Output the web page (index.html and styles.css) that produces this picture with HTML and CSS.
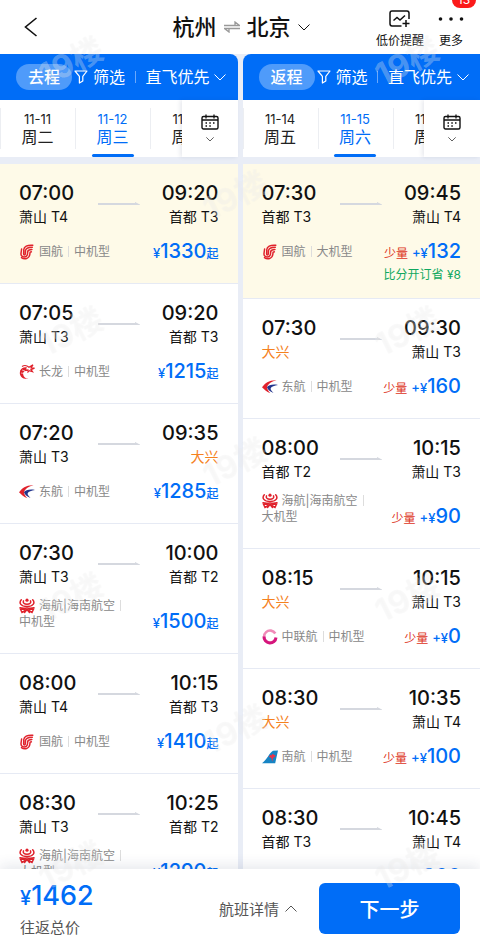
FILE: index.html
```html
<!DOCTYPE html>
<html lang="zh-CN">
<head>
<meta charset="utf-8">
<meta name="viewport" content="width=device-width, initial-scale=1">
<title>杭州 ⇌ 北京</title>
<link rel="stylesheet" href="styles.css">
</head>
<body>
<svg class="defs" aria-hidden="true">
  <symbol id="chevron" viewBox="0 0 12 8"><path d="M.5 1.500l5.500 5.500 5.500-5.500" fill="none" stroke="currentColor" stroke-width="1"/></symbol>
  <symbol id="funnel" viewBox="0 0 14 14"><path d="M1 1h12L8.800 6.400V11L5.400 13V6.400z" fill="none" stroke="currentColor" stroke-width="1.200" stroke-linejoin="round"/></symbol>
  <symbol id="calendar" viewBox="0 0 18 16"><rect x="1" y="2.500" width="16" height="12.500" rx="1.500" fill="none" stroke="currentColor" stroke-width="1.400"/><path d="M1 6h16M5 .5v4M13 .5v4" stroke="currentColor" stroke-width="1.300"/><path d="M4.500 9H6M8.300 9h1.500M12 9h1.500M4.500 12H6M8.300 12h1.500" stroke="currentColor" stroke-width="1.500"/></symbol>
  <symbol id="arrow" viewBox="0 0 42 4"><path d="M0 1h37V0l5 2.500V3H0z" fill="currentColor"/></symbol>
  <symbol id="airchina" viewBox="0 0 16 16"><g fill="none" stroke="#e0222c" stroke-width="1.500" stroke-linecap="round"><path d="M13.800 1.200C8 .8 5 2.500 4.800 5.500L4.600 10c0 1.300 1.600 1.300 1.700 0l.2-3.500C6.800 4.500 9 3.300 13.300 3.300"/><path d="M2.600 5L2 9.500c-.4 4.500 6 4.500 6.500.5l.2-2.500C9 6 10.500 5.500 12.900 5.400"/><path d="M2.500 13.600c3 2.300 7.800 1 8.300-3.100l.3-2.300 1.200-.4"/></g></symbol>
  <symbol id="loong" viewBox="0 0 16 16"><path d="M9.500 15C3 15.500 0 11.500 1 7.500 2 4 5 2.800 8 3.500L7 5.200l3 .3-1.500 1.700C5 6.500 3.800 8 4.200 10.500c.4 2.500 2.300 4 5.300 4.500z" fill="#e0222c"/><path d="M3 2.500c3-2 5-1 7 .8l4-2.500-2 3 3.500.3-3.500 1.500 1.500 2-3.500-1-1.500 2M5 5l-3.500 2" fill="none" stroke="#e0222c" stroke-width="1.200"/><path d="M3 6l3 1M2 9l3 .5" stroke="#fff" stroke-width=".6"/></symbol>
  <symbol id="eastern" viewBox="0 0 16 16"><path d="M14.500 1.200C7.500.8 3 4 0 8.300c2 2 4.500 4.700 8.300 6C6.200 11.700 4.800 9.800 5.200 8 6 4.500 10 2.300 14.500 1.200z" fill="#e0222c"/><path d="M16 6c-5-1-9.500 0-11 2.200.8 2.500 2.800 4 6.500 5.800-2-2.200-3.300-3.600-2.800-4.800C9.500 7.500 12.500 6.600 16 6z" fill="#23358c"/></symbol>
  <symbol id="hainan" viewBox="0 0 16 16"><g fill="none" stroke="#e0222c" stroke-width="1.500" stroke-linecap="round"><path d="M2.300 1.800C-.5 5 2 8.500 8 8.500S16.500 5 13.700 1.800"/><path d="M4.500 2.800c-1 2 .8 3.500 3.500 3.500s4.500-1.500 3.500-3.500"/><path d="M1 9.800c3.300 1 5 .3 7 .3s3.700.7 7-.3"/><path d="M6 11l-4.500.3 1.500 3.200L7 12M10 11l4.500.3-1.500 3.200L9 12M5.500 14.500L8 11.500l2.500 3"/></g><circle cx="8" cy="2.200" r="1.600" fill="#e0222c"/></symbol>
  <symbol id="united" viewBox="0 0 16 16"><path d="M13.300 4.500A6 6 0 1 0 13.600 10" fill="none" stroke="#f08ab8" stroke-width="2.600"/><path d="M2 7.500a6 6 0 0 0 12 1" fill="none" stroke="#d5157c" stroke-width="3"/></symbol>
  <symbol id="southern" viewBox="0 0 16 16"><path d="M0 14.200C5 11 7.500 3.500 11 1.800l5-.3-2.800 12.700z" fill="#1684c4"/><path d="M7 7.500c1-1.500 2-2 2.500-1 .8-1.800 2-1.800 2.500-.3 1-.7 2 .3 1.200 1.300-1 .8-2 1-2.200 1.800l-.8 3.500-.7-3.500c-.6-.8-1.700-.7-2.500-1.800z" fill="#e6324a"/></symbol>
</svg>

<header class="topbar">
  <button class="back" aria-label="返回"><svg viewBox="0 0 14 20"><path d="M12.500 1L1.500 10l11 9" fill="none" stroke="currentColor" stroke-width="1.600"/></svg></button>
  <button class="route"><span>杭州</span><svg class="swap" viewBox="0 0 16 12"><path d="M0 4.500h15.500L11 1v3.500M16 7.500H.5L5 11V7.500" fill="none" stroke="currentColor" stroke-width="1.300"/></svg><span>北京</span><svg class="chev"><use href="#chevron"/></svg></button>
  <div class="actions">
    <button class="action"><svg class="alert-icon" viewBox="0 0 22 18"><path d="M20 9V3.200C20 2 19.300 1 18 1H3C1.800 1 1 2 1 3.200v10.600C1 15 1.800 16 3 16h9.500M4.500 10.500l3.500-3 3 2.500 5-4.500M13.500 13.500h7M17 10v7" fill="none" stroke="currentColor" stroke-width="1.500"/></svg><span>低价提醒</span></button>
    <button class="action more"><svg class="dots" viewBox="0 0 26 18"><circle cx="2.500" cy="9" r="1.800"/><circle cx="13" cy="9" r="1.800"/><circle cx="23.500" cy="9" r="1.800"/></svg><span>更多</span><b class="badge">13</b></button>
  </div>
</header>

<main class="columns">
  <section class="column outbound">
    <div class="filters"><span class="pill">去程</span><button class="filter"><svg class="funnel"><use href="#funnel"/></svg>筛选</button><i class="bar"></i><button class="filter">直飞优先<svg class="chev"><use href="#chevron"/></svg></button></div>
    <nav class="dates">
      <div class="days"><button class="day"><span>11-11</span><b>周二</b></button><button class="day active"><span>11-12</span><b>周三</b></button><button class="day"><span>11-13</span><b>周四</b></button></div>
      <button class="calendar" aria-label="选择日期"><svg class="cal"><use href="#calendar"/></svg><svg class="small-chev"><use href="#chevron"/></svg></button>
    </nav>
    <ul class="flights">
      <li class="flight selected">
        <div class="times"><div><time>07:00</time><p>萧山 T4</p></div><svg class="arrow"><use href="#arrow"/></svg><div class="end"><time>09:20</time><p>首都 T3</p></div></div>
        <div class="meta"><p class="airline"><svg class="logo"><use href="#airchina"/></svg><span>国航</span><i></i><span>中机型</span></p><p class="price"><small>¥</small>1330<em>起</em></p></div>
      </li>
      <li class="flight">
        <div class="times"><div><time>07:05</time><p>萧山 T3</p></div><svg class="arrow"><use href="#arrow"/></svg><div class="end"><time>09:20</time><p>首都 T3</p></div></div>
        <div class="meta"><p class="airline"><svg class="logo"><use href="#loong"/></svg><span>长龙</span><i></i><span>中机型</span></p><p class="price"><small>¥</small>1215<em>起</em></p></div>
      </li>
      <li class="flight">
        <div class="times"><div><time>07:20</time><p>萧山 T3</p></div><svg class="arrow"><use href="#arrow"/></svg><div class="end"><time>09:35</time><p class="other">大兴</p></div></div>
        <div class="meta"><p class="airline"><svg class="logo"><use href="#eastern"/></svg><span>东航</span><i></i><span>中机型</span></p><p class="price"><small>¥</small>1285<em>起</em></p></div>
      </li>
      <li class="flight">
        <div class="times"><div><time>07:30</time><p>萧山 T3</p></div><svg class="arrow"><use href="#arrow"/></svg><div class="end"><time>10:00</time><p>首都 T2</p></div></div>
        <div class="meta"><p class="airline"><svg class="logo"><use href="#hainan"/></svg><span>海航|海南航空</span><i></i><span>中机型</span></p><p class="price"><small>¥</small>1500<em>起</em></p></div>
      </li>
      <li class="flight">
        <div class="times"><div><time>08:00</time><p>萧山 T4</p></div><svg class="arrow"><use href="#arrow"/></svg><div class="end"><time>10:15</time><p>首都 T3</p></div></div>
        <div class="meta"><p class="airline"><svg class="logo"><use href="#airchina"/></svg><span>国航</span><i></i><span>中机型</span></p><p class="price"><small>¥</small>1410<em>起</em></p></div>
      </li>
      <li class="flight">
        <div class="times"><div><time>08:30</time><p>萧山 T3</p></div><svg class="arrow"><use href="#arrow"/></svg><div class="end"><time>10:25</time><p>首都 T2</p></div></div>
        <div class="meta"><p class="airline"><svg class="logo"><use href="#hainan"/></svg><span>海航|海南航空</span><i></i><span>大机型</span></p><p class="price"><small>¥</small>1290<em>起</em></p></div>
      </li>
    </ul>
  </section>

  <section class="column inbound">
    <div class="filters"><span class="pill">返程</span><button class="filter"><svg class="funnel"><use href="#funnel"/></svg>筛选</button><i class="bar"></i><button class="filter">直飞优先<svg class="chev"><use href="#chevron"/></svg></button></div>
    <nav class="dates">
      <div class="days"><button class="day"><span>11-14</span><b>周五</b></button><button class="day active"><span>11-15</span><b>周六</b></button><button class="day"><span>11-16</span><b>周日</b></button></div>
      <button class="calendar" aria-label="选择日期"><svg class="cal"><use href="#calendar"/></svg><svg class="small-chev"><use href="#chevron"/></svg></button>
    </nav>
    <ul class="flights">
      <li class="flight selected">
        <div class="times"><div><time>07:30</time><p>首都 T3</p></div><svg class="arrow"><use href="#arrow"/></svg><div class="end"><time>09:45</time><p>萧山 T4</p></div></div>
        <div class="meta"><p class="airline"><svg class="logo"><use href="#airchina"/></svg><span>国航</span><i></i><span>大机型</span></p><p class="price"><strong>少量</strong><small>+¥</small>132</p></div>
        <p class="saving">比分开订省 ¥8</p>
      </li>
      <li class="flight">
        <div class="times"><div><time>07:30</time><p class="other">大兴</p></div><svg class="arrow"><use href="#arrow"/></svg><div class="end"><time>09:30</time><p>萧山 T3</p></div></div>
        <div class="meta"><p class="airline"><svg class="logo"><use href="#eastern"/></svg><span>东航</span><i></i><span>中机型</span></p><p class="price"><strong>少量</strong><small>+¥</small>160</p></div>
      </li>
      <li class="flight">
        <div class="times"><div><time>08:00</time><p>首都 T2</p></div><svg class="arrow"><use href="#arrow"/></svg><div class="end"><time>10:15</time><p>萧山 T3</p></div></div>
        <div class="meta"><p class="airline"><svg class="logo"><use href="#hainan"/></svg><span>海航|海南航空</span><i></i><span>大机型</span></p><p class="price"><strong>少量</strong><small>+¥</small>90</p></div>
      </li>
      <li class="flight">
        <div class="times"><div><time>08:15</time><p class="other">大兴</p></div><svg class="arrow"><use href="#arrow"/></svg><div class="end"><time>10:15</time><p>萧山 T3</p></div></div>
        <div class="meta"><p class="airline"><svg class="logo"><use href="#united"/></svg><span>中联航</span><i></i><span>中机型</span></p><p class="price"><strong>少量</strong><small>+¥</small>0</p></div>
      </li>
      <li class="flight">
        <div class="times"><div><time>08:30</time><p class="other">大兴</p></div><svg class="arrow"><use href="#arrow"/></svg><div class="end"><time>10:35</time><p>萧山 T4</p></div></div>
        <div class="meta"><p class="airline"><svg class="logo"><use href="#southern"/></svg><span>南航</span><i></i><span>中机型</span></p><p class="price"><strong>少量</strong><small>+¥</small>100</p></div>
      </li>
      <li class="flight">
        <div class="times"><div><time>08:30</time><p>首都 T3</p></div><svg class="arrow"><use href="#arrow"/></svg><div class="end"><time>10:45</time><p>萧山 T4</p></div></div>
        <div class="meta"><p class="airline"><svg class="logo"><use href="#airchina"/></svg><span>国航</span><i></i><span>中机型</span></p><p class="price"><strong>少量</strong><small>+¥</small>200</p></div>
      </li>
    </ul>
  </section>
</main>

<footer class="summary">
  <div class="total"><p class="sum"><small>¥</small>1462</p><p class="label">往返总价</p></div>
  <button class="details">航班详情<svg class="chev up"><use href="#chevron"/></svg></button>
  <button class="next">下一步</button>
</footer>

<div class="watermarks" aria-hidden="true">
  <span class="mark m1">19楼</span><span class="mark m2">19楼</span><span class="mark m3">19楼</span><span class="mark m4">19楼</span><span class="mark m5">19楼</span><span class="mark m6">19楼</span><span class="mark m7">19楼</span><span class="mark m8">19楼</span><span class="mark m9">19楼</span><span class="mark m10">19楼</span><span class="mark m11">19楼</span>
</div>
</body>
</html>
```
FILE: styles.css
```css
* { box-sizing: border-box; margin: 0; padding: 0; }

body {
  position: relative;
  display: flex;
  flex-direction: column;
  height: 100vh;
  overflow: hidden;
  background: #fff;
  color: #111;
  font-family: Inter, "Noto Sans CJK SC", sans-serif;
  font-size: 14px;
}

button { border: 0; background: none; color: inherit; font: inherit; cursor: pointer; }
ul { list-style: none; }
.defs { position: absolute; width: 0; height: 0; }
.chev { width: 12px; height: 8px; flex: none; }

/* Top bar */
.topbar {
  display: grid;
  grid-template-columns: 1fr auto 1fr;
  align-items: center;
  height: 54px;
  flex: none;
  padding: 0 16px 0 18px;
}
.back { justify-self: start; width: 14px; height: 20px; margin-left: 6px; }
.back svg { display: block; width: 14px; height: 20px; }
.route { display: flex; align-items: center; gap: 7px; font-size: 22px; font-weight: 500; line-height: 30px; }
.swap { width: 16px; height: 12px; color: #999; }
.actions { display: flex; justify-content: flex-end; gap: 14px; padding-top: 6px; }
.action { position: relative; display: flex; flex-direction: column; align-items: center; gap: 4px; font-size: 12px; line-height: 18px; white-space: nowrap; }
.alert-icon { width: 22px; height: 18px; }
.dots { width: 26px; height: 18px; fill: #111; }
.badge {
  position: absolute;
  top: -18px;
  right: -12px;
  width: 24px;
  height: 16px;
  border-radius: 8px;
  background: #fb1a1a;
  color: #fff;
  font-size: 12px;
  font-weight: 400;
  line-height: 16px;
}

/* Outbound and return lists, side by side */
.columns { flex: 1; min-height: 0; display: grid; grid-template-columns: 1fr 1fr; gap: 5px; background: #e9edf6; overflow: hidden; }
.column { min-width: 0; }
.filters {
  display: flex;
  align-items: center;
  gap: 2px;
  height: 46px;
  padding: 0 11px 0 16px;
  background: #006df7;
  color: #fff;
  font-size: 16px;
}
.outbound .filters { border-top-right-radius: 8px; }
.inbound .filters { border-top-left-radius: 8px; }
.pill { padding: 0 12px; border-radius: 13px; background: #4f9bfa; font-weight: 500; line-height: 26px; }
.filter { display: flex; align-items: center; gap: 5px; line-height: 24px; white-space: nowrap; }
.funnel { width: 14px; height: 14px; }
.bar { width: 1px; height: 12px; margin: 0 auto; background: #6aa8fb; }

.dates { display: flex; height: 57px; background: #fff; }
.days { flex: 1; min-width: 0; display: flex; overflow: hidden; }
.day { position: relative; flex: 0 0 75px; display: flex; flex-direction: column; align-items: center; padding-top: 10px; color: #222; }
.day::before { content: ""; position: absolute; left: 0; top: 8px; bottom: 8px; width: 1px; background: #eceef2; }
.day span { font-size: 13px; line-height: 18px; }
.day b { font-size: 16px; font-weight: 400; line-height: 18px; }
.day.active { color: #006df7; }
.day.active::after { content: ""; position: absolute; bottom: 0; width: 42px; height: 3px; border-radius: 2px; background: #006df7; }
.calendar { flex: 0 0 56px; display: flex; flex-direction: column; align-items: center; padding-top: 14px; gap: 6px; box-shadow: -2px 0 4px rgba(30, 50, 90, .1); }
.cal { width: 18px; height: 16px; }
.small-chev { width: 8px; height: 6px; }

/* Flight cards */
.flights { padding-top: 7px; }
.flight { min-height: 120px; padding: 16px 19px; border-bottom: 1px solid #e6eaf4; background: #fff; }
.flight.selected { background: #fefae8; }
.times { display: grid; grid-template-columns: 1fr auto 1fr; align-items: center; }
.times time { display: block; font-size: 20px; font-weight: 500; line-height: 26px; }
.times p { font-size: 14px; line-height: 22px; }
.end { text-align: right; }
.other { color: #f5821f; }
.arrow { width: 42px; height: 4px; color: #d5d8df; }
.meta { display: flex; align-items: flex-end; justify-content: space-between; min-height: 27px; margin-top: 10px; }
.airline { min-width: 0; padding-bottom: 7px; color: #888; font-size: 12px; line-height: 16px; }
.airline span { white-space: nowrap; }
.airline i { display: inline-block; width: 1px; height: 11px; margin: 0 5px; background: #ddd; vertical-align: -1px; }
.logo { width: 16px; height: 16px; margin-right: 4px; vertical-align: top; }
.price { flex: none; color: #006df7; font-size: 20px; font-weight: 500; line-height: 26px; white-space: nowrap; }
.price small { font-size: 13px; }
.price em { font-size: 12px; font-style: normal; }
.price strong { margin-right: 4px; color: #dd3322; font-size: 12px; font-weight: 400; }
.saving { color: #10a860; font-size: 12px; line-height: 15px; text-align: right; }

/* Fare summary */
.summary {
  position: relative;
  display: flex;
  align-items: center;
  flex: none;
  height: 69px;
  padding: 10px 20px 0;
  background: #fff;
  box-shadow: 0 -4px 12px rgba(30, 50, 90, .1);
}
.total { flex: 1; }
.sum { color: #006df7; font-size: 27px; font-weight: 500; line-height: 36px; }
.sum small { font-size: 20px; }
.label { color: #555; font-size: 15px; line-height: 24px; }
.details { display: flex; align-items: center; gap: 6px; margin-right: 22px; color: #555; font-size: 15px; }
.up { transform: rotate(180deg); }
.next { width: 141px; height: 51px; border-radius: 6px; background: #006df7; color: #fff; font-size: 20px; font-weight: 500; }

/* Watermark layer over the whole page */
.watermarks { position: absolute; inset: 0; overflow: hidden; pointer-events: none; }
.mark {
  position: absolute;
  color: rgba(255, 255, 255, .3);
  font-size: 32px;
  font-weight: 700;
  line-height: 36px;
  text-shadow: 0 0 1px rgba(0, 0, 0, .04);
  transform: rotate(-27deg);
}
.m1, .m4, .m7, .m10 { left: 38px; }
.m2, .m5, .m8, .m11 { left: 374px; }
.m3, .m6, .m9 { left: 202px; }
.m1, .m2 { top: 44px; }
.m3 { top: 178px; }
.m4, .m5 { top: 314px; }
.m6 { top: 445px; }
.m7, .m8 { top: 580px; }
.m9 { top: 712px; }
.m10, .m11 { top: 848px; }
```
